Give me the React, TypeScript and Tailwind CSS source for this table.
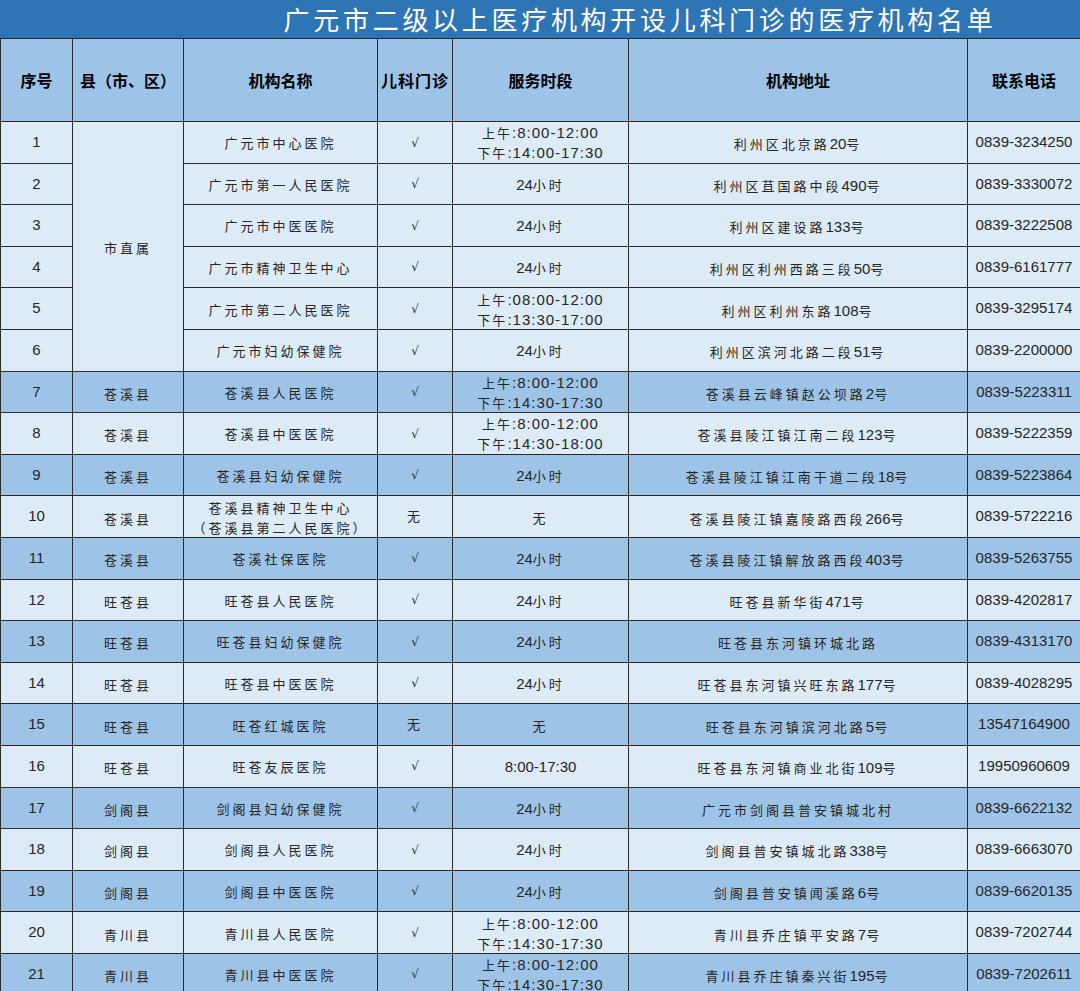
import React from "react";

type Row = {
  no: number;
  county?: string;
  name: string[];
  peds: string;
  time: string[];
  addr: string;
  phone: string;
};

const rows: Row[] = [
  { no: 1, name: ["广元市中心医院"], peds: "√", time: ["上午:8:00-12:00", "下午:14:00-17:30"], addr: "利州区北京路20号", phone: "0839-3234250" },
  { no: 2, name: ["广元市第一人民医院"], peds: "√", time: ["24小时"], addr: "利州区苴国路中段490号", phone: "0839-3330072" },
  { no: 3, name: ["广元市中医医院"], peds: "√", time: ["24小时"], addr: "利州区建设路133号", phone: "0839-3222508" },
  { no: 4, name: ["广元市精神卫生中心"], peds: "√", time: ["24小时"], addr: "利州区利州西路三段50号", phone: "0839-6161777" },
  { no: 5, name: ["广元市第二人民医院"], peds: "√", time: ["上午:08:00-12:00", "下午:13:30-17:00"], addr: "利州区利州东路108号", phone: "0839-3295174" },
  { no: 6, name: ["广元市妇幼保健院"], peds: "√", time: ["24小时"], addr: "利州区滨河北路二段51号", phone: "0839-2200000" },
  { no: 7, county: "苍溪县", name: ["苍溪县人民医院"], peds: "√", time: ["上午:8:00-12:00", "下午:14:30-17:30"], addr: "苍溪县云峰镇赵公坝路2号", phone: "0839-5223311" },
  { no: 8, county: "苍溪县", name: ["苍溪县中医医院"], peds: "√", time: ["上午:8:00-12:00", "下午:14:30-18:00"], addr: "苍溪县陵江镇江南二段123号", phone: "0839-5222359" },
  { no: 9, county: "苍溪县", name: ["苍溪县妇幼保健院"], peds: "√", time: ["24小时"], addr: "苍溪县陵江镇江南干道二段18号", phone: "0839-5223864" },
  { no: 10, county: "苍溪县", name: ["苍溪县精神卫生中心", "（苍溪县第二人民医院）"], peds: "无", time: ["无"], addr: "苍溪县陵江镇嘉陵路西段266号", phone: "0839-5722216" },
  { no: 11, county: "苍溪县", name: ["苍溪社保医院"], peds: "√", time: ["24小时"], addr: "苍溪县陵江镇解放路西段403号", phone: "0839-5263755" },
  { no: 12, county: "旺苍县", name: ["旺苍县人民医院"], peds: "√", time: ["24小时"], addr: "旺苍县新华街471号", phone: "0839-4202817" },
  { no: 13, county: "旺苍县", name: ["旺苍县妇幼保健院"], peds: "√", time: ["24小时"], addr: "旺苍县东河镇环城北路", phone: "0839-4313170" },
  { no: 14, county: "旺苍县", name: ["旺苍县中医医院"], peds: "√", time: ["24小时"], addr: "旺苍县东河镇兴旺东路177号", phone: "0839-4028295" },
  { no: 15, county: "旺苍县", name: ["旺苍红城医院"], peds: "无", time: ["无"], addr: "旺苍县东河镇滨河北路5号", phone: "13547164900" },
  { no: 16, county: "旺苍县", name: ["旺苍友辰医院"], peds: "√", time: ["8:00-17:30"], addr: "旺苍县东河镇商业北街109号", phone: "19950960609" },
  { no: 17, county: "剑阁县", name: ["剑阁县妇幼保健院"], peds: "√", time: ["24小时"], addr: "广元市剑阁县普安镇城北村", phone: "0839-6622132" },
  { no: 18, county: "剑阁县", name: ["剑阁县人民医院"], peds: "√", time: ["24小时"], addr: "剑阁县普安镇城北路338号", phone: "0839-6663070" },
  { no: 19, county: "剑阁县", name: ["剑阁县中医医院"], peds: "√", time: ["24小时"], addr: "剑阁县普安镇闻溪路6号", phone: "0839-6620135" },
  { no: 20, county: "青川县", name: ["青川县人民医院"], peds: "√", time: ["上午:8:00-12:00", "下午:14:30-17:30"], addr: "青川县乔庄镇平安路7号", phone: "0839-7202744" },
  { no: 21, county: "青川县", name: ["青川县中医医院"], peds: "√", time: ["上午:8:00-12:00", "下午:14:30-17:30"], addr: "青川县乔庄镇秦兴街195号", phone: "0839-7202611" },
];

function Mixed({ text, asciiSpaced = false }: { text: string; asciiSpaced?: boolean }) {
  const parts = text.match(/[\x00-\x7F]+|[^\x00-\x7F]+/g) || [];
  return (
    <span className="whitespace-nowrap">
      {parts.map((p, i) =>
        /^[\x00-\x7F]+$/.test(p) ? (
          <span
            key={i}
            className={
              asciiSpaced
                ? "font-['Liberation_Sans',sans-serif] text-[15px] leading-[18px] tracking-[1px]"
                : "font-['Liberation_Sans',sans-serif] text-[15px] leading-[18px]"
            }
          >
            {p}
          </span>
        ) : (
          <span
            key={i}
            className={
              asciiSpaced
                ? "font-['Noto_Sans_CJK_SC',sans-serif] text-[13px] leading-[18px] tracking-[2px]"
                : "font-['Noto_Sans_CJK_SC',sans-serif] text-[13px] leading-[18px] tracking-[3px]"
            }
          >
            {p}
          </span>
        )
      )}
    </span>
  );
}

const cell = "border border-[#2a2a2a] text-center align-middle p-0";

export default function App() {
  return (
    <div className="w-[1080px] bg-white font-['Noto_Sans_CJK_SC',sans-serif] text-[#262626]">
      <div className="h-[38px] bg-[#2e75b6] flex items-center justify-center pl-[200px]">
        <span className="text-white text-[26px] tracking-[3.7px] leading-none font-['Noto_Sans_CJK_SC',sans-serif]">
          广元市二级以上医疗机构开设儿科门诊的医疗机构名单
        </span>
      </div>
      <table className="w-[1080px] table-fixed border-collapse">
        <colgroup>
          <col className="w-[72px]" />
          <col className="w-[111px]" />
          <col className="w-[194px]" />
          <col className="w-[75px]" />
          <col className="w-[176px]" />
          <col className="w-[339px]" />
          <col className="w-[113px]" />
        </colgroup>
        <thead>
          <tr className="h-[83px] bg-[#9dc3e6] text-black font-bold text-[16px]">
            <th className={cell}>序号</th>
            <th className={cell}>县（市、区）</th>
            <th className={cell}>机构名称</th>
            <th className={`${cell} tracking-[1px]`}>儿科门诊</th>
            <th className={cell}>服务时段</th>
            <th className={cell}>机构地址</th>
            <th className={cell}>联系电话</th>
          </tr>
        </thead>
        <tbody>
          {rows.map((r) => {
            const dark = r.no >= 7 && r.no % 2 === 1;
            return (
              <tr key={r.no} className={`h-[41.6px] ${dark ? "bg-[#9dc3e6]" : "bg-[#ddebf7]"}`}>
                <td className={`${cell} font-['Liberation_Sans',sans-serif] text-[15px]`}>{r.no}</td>
                {r.no === 1 ? (
                  <td rowSpan={6} className={cell}>
                    <Mixed text="市直属" />
                  </td>
                ) : r.no > 6 ? (
                  <td className={cell}>
                    <Mixed text={r.county || ""} />
                  </td>
                ) : null}
                <td className={`${cell} leading-[19px]`}>
                  {r.name.map((n, i) => (
                    <div key={i} className="leading-[19px]">
                      <Mixed text={n} />
                    </div>
                  ))}
                </td>
                <td className={`${cell} text-[13px] font-['DejaVu_Sans',sans-serif]`}>
                  {r.peds === "√" ? <span className="text-[12px]">√</span> : <Mixed text={r.peds} />}
                </td>
                <td className={`${cell} leading-[18px]`}>
                  {r.time.map((t, i) => (
                    <div key={i} className="leading-[18px]">
                      <Mixed text={t} asciiSpaced={r.time.length > 1} />
                    </div>
                  ))}
                </td>
                <td className={cell}>
                  <Mixed text={r.addr} />
                </td>
                <td className={`${cell} font-['Liberation_Sans',sans-serif] text-[15px]`}>{r.phone}</td>
              </tr>
            );
          })}
        </tbody>
      </table>
    </div>
  );
}
